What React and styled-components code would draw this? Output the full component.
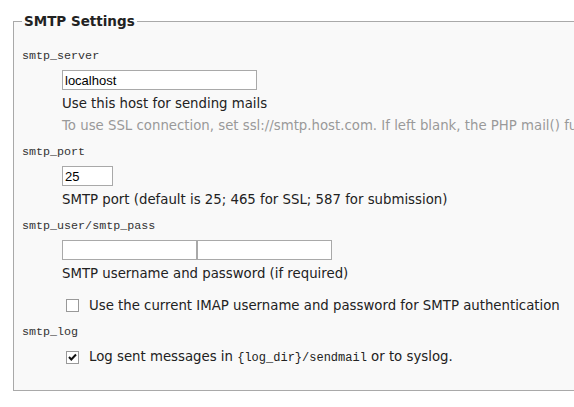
import React from "react";
import styled, { createGlobalStyle } from "styled-components";

const Global = createGlobalStyle`
  html, body { margin: 0; padding: 0; background: #ffffff; overflow: hidden; }
  body { font-family: "DejaVu Sans", Verdana, sans-serif; font-size: 13.3px; color: #333; }
`;

const Page = styled.div`
  padding: 11px 0 0 13px;
  width: 700px;
`;

const Fieldset = styled.fieldset`
  margin: 0;
  padding: 10px 8px 21px 8px;
  border: 1px solid #a9a9a9;
  background: #f9f9f9;
  min-width: 0;
`;

const Legend = styled.legend`
  padding: 0 2px;
  font-family: "DejaVu Sans", Verdana, sans-serif;
  font-weight: bold;
  font-size: 13.5px;
  line-height: 20px;
  color: #222;
`;

const Prop = styled.div`
  display: flex;
  flex-direction: column;
`;

const PropName = styled.div`
  margin-top: 6px;
  font-family: "Liberation Mono", "Courier New", monospace;
  font-size: 11.7px;
  line-height: 18px;
  color: #333;
`;

const PropBody = styled.div`
  margin-left: 40px;
  padding-top: 5px;
  display: flex;
  flex-direction: column;
  align-items: flex-start;
`;

const InputGroup = styled.div`
  display: flex;
`;

const TextInput = styled.input`
  box-sizing: border-box;
  width: ${(p) => p.$w}px;
  height: 20px;
  margin: 0;
  padding: 1px 2px;
  border: 1px solid #a9a9a9;
  background: #ffffff;
  font-family: "Liberation Sans", Arial, sans-serif;
  font-size: 13px;
  color: #000;
  outline: none;
`;

const Desc = styled.div`
  margin-top: 3px;
  line-height: 22px;
  white-space: nowrap;
  color: #222;
`;

const Hint = styled.div`
  line-height: 22px;
  white-space: nowrap;
  color: #999;
`;

const CheckRow = styled.label`
  display: flex;
  align-items: center;
  line-height: 22px;
  margin-top: ${(p) => p.$mt || 0}px;
  white-space: nowrap;
  color: #222;
`;

const Box = styled.span`
  box-sizing: border-box;
  width: 13px;
  height: 13px;
  margin: -1px 10px 0 4px;
  border: 1px solid #999;
  background: #ffffff;
  display: flex;
  align-items: center;
  justify-content: center;
  flex: none;
`;

const Code = styled.code`
  font-family: "Liberation Mono", "Courier New", monospace;
  font-size: 12px;
`;

const Check = ({ checked }) => (
  <Box>
    {checked && (
      <svg width="11" height="11" viewBox="0 0 11 11">
        <path d="M2 5 L4.3 7.5 L9 2.5" fill="none" stroke="#111" strokeWidth="2" />
      </svg>
    )}
  </Box>
);

export default function App() {
  return (
    <Page>
      <Global />
      <Fieldset>
        <Legend>SMTP Settings</Legend>

        <Prop>
          <PropName>smtp_server</PropName>
          <PropBody>
            <TextInput $w={195} defaultValue="localhost" />
            <Desc>Use this host for sending mails</Desc>
            <Hint>
              To use SSL connection, set ssl://smtp.host.com. If left blank, the PHP mail() function is used.
            </Hint>
          </PropBody>
        </Prop>

        <Prop>
          <PropName>smtp_port</PropName>
          <PropBody>
            <TextInput $w={51} defaultValue="25" />
            <Desc>SMTP port (default is 25; 465 for SSL; 587 for submission)</Desc>
          </PropBody>
        </Prop>

        <Prop>
          <PropName>smtp_user/smtp_pass</PropName>
          <PropBody>
            <InputGroup>
              <TextInput $w={135} defaultValue="" />
              <TextInput $w={135} type="password" defaultValue="" />
            </InputGroup>
            <Desc>SMTP username and password (if required)</Desc>
            <CheckRow $mt={10}>
              <Check checked={false} />
              Use the current IMAP username and password for SMTP authentication
            </CheckRow>
          </PropBody>
        </Prop>

        <Prop>
          <PropName>smtp_log</PropName>
          <PropBody>
            <CheckRow>
              <Check checked />
              <span>
                Log sent messages in <Code>{"{log_dir}"}/sendmail</Code> or to syslog.
              </span>
            </CheckRow>
          </PropBody>
        </Prop>
      </Fieldset>
    </Page>
  );
}
